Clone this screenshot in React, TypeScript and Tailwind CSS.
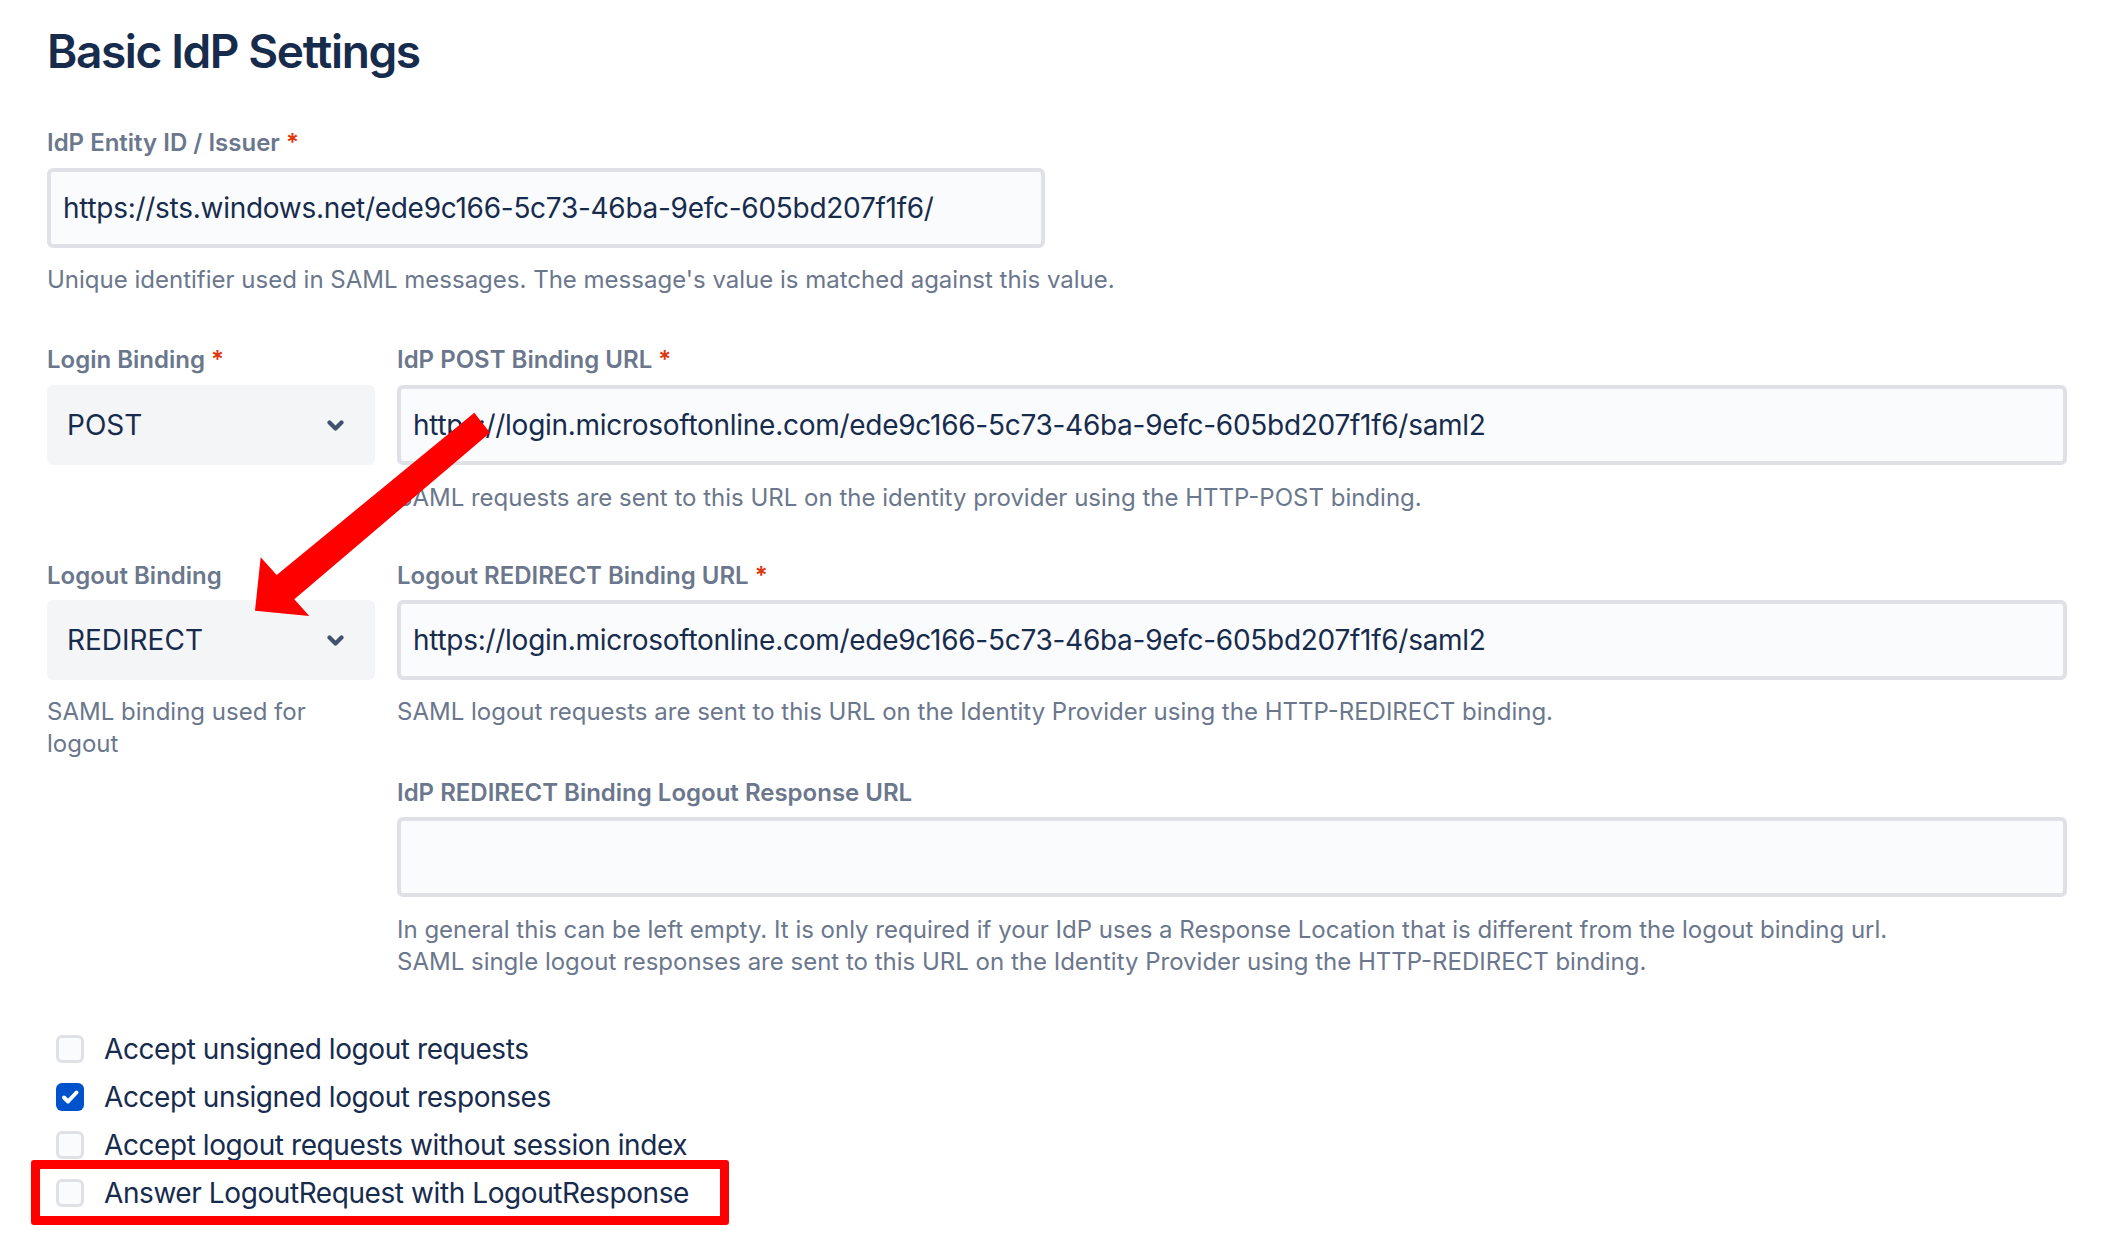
import React from "react";

function Label({ text, required }: { text: string; required?: boolean }) {
  return (
    <div className="text-[24px] leading-[32px] font-semibold text-[#6b778c]">
      {text}
      {required && <span className="text-[#de350b]"> *</span>}
    </div>
  );
}

function Help({ children }: { children: React.ReactNode }) {
  return <div className="text-[24px] leading-[32px] text-[#6b778c]">{children}</div>;
}

function TextInput({ value, className }: { value: string; className?: string }) {
  return (
    <div
      className={
        "flex items-center h-[80px] border-[4px] border-[#dfe1e6] bg-[#fafbfc] rounded-[6px] pl-[12px] text-[28px] leading-[36px] tracking-[-0.01em] text-[#172b4d] " +
        (className || "")
      }
    >
      {value}
    </div>
  );
}

function Select({ value }: { value: string }) {
  return (
    <div className="flex items-center justify-between h-[80px] bg-[#f4f5f7] rounded-[6px] pl-[20px] pr-[31px] text-[28px] leading-[36px] text-[#172b4d]">
      <span>{value}</span>
      <svg width="17" height="11" viewBox="0 0 17 11" fill="none">
        <path d="M2.5 2.5 L8.5 8.5 L14.5 2.5" stroke="#42526e" strokeWidth="4.2" strokeLinecap="round" strokeLinejoin="round" />
      </svg>
    </div>
  );
}

function Checkbox({ checked, label }: { checked?: boolean; label: string }) {
  return (
    <div className="flex items-center h-[28px] pl-[9px]">
      {checked ? (
        <div className="w-[28px] h-[28px] rounded-[6px] bg-[#0052cc] flex items-center justify-center">
          <svg width="28" height="28" viewBox="0 0 28 28" fill="none">
            <path d="M8 14.5 L12 18.5 L20.5 9.5" stroke="white" strokeWidth="4" strokeLinecap="round" strokeLinejoin="round" />
          </svg>
        </div>
      ) : (
        <div className="w-[28px] h-[28px] rounded-[6px] border-[3px] border-[#dfe1e6] bg-[#fafbfc]" />
      )}
      <span className="ml-[20px] text-[28px] leading-[28px] tracking-[-0.015em] text-[#172b4d]">{label}</span>
    </div>
  );
}

export default function App() {
  return (
    <div className="relative w-[2119px] min-h-[1242px] bg-white pl-[47px] pr-[52px] pt-[23px] font-['Inter','Noto_Sans',sans-serif]">
      <h1 className="text-[46px] leading-[56px] font-semibold text-[#172b4d] tracking-[-0.03em]">Basic IdP Settings</h1>

      <div className="mt-[48px]">
        <Label text="IdP Entity ID / Issuer" required />
        <TextInput className="mt-[9px] w-[998px] h-[78px]" value="https://sts.windows.net/ede9c166-5c73-46ba-9efc-605bd207f1f6/" />
        <div className="mt-[16px]">
          <Help>Unique identifier used in SAML messages. The message's value is matched against this value.</Help>
        </div>
      </div>

      <div className="mt-[48px] grid grid-cols-[328px_1fr] gap-x-[22px]">
        <div>
          <Label text="Login Binding" required />
          <div className="mt-[9px]">
            <Select value="POST" />
          </div>
        </div>
        <div>
          <Label text="IdP POST Binding URL" required />
          <TextInput className="mt-[9px]" value="https://login.microsoftonline.com/ede9c166-5c73-46ba-9efc-605bd207f1f6/saml2" />
          <div className="mt-[17px]">
            <Help>SAML requests are sent to this URL on the identity provider using the HTTP-POST binding.</Help>
          </div>
        </div>
      </div>

      <div className="mt-[46px] grid grid-cols-[328px_1fr] gap-x-[22px]">
        <div>
          <Label text="Logout Binding" />
          <div className="mt-[8px]">
            <Select value="REDIRECT" />
          </div>
          <div className="mt-[16px]">
            <Help>SAML binding used for logout</Help>
          </div>
        </div>
        <div>
          <Label text="Logout REDIRECT Binding URL" required />
          <TextInput className="mt-[8px]" value="https://login.microsoftonline.com/ede9c166-5c73-46ba-9efc-605bd207f1f6/saml2" />
          <div className="mt-[16px]">
            <Help>SAML logout requests are sent to this URL on the Identity Provider using the HTTP-REDIRECT binding.</Help>
          </div>
        </div>
      </div>

      <div className="mt-[17px] grid grid-cols-[328px_1fr] gap-x-[22px]">
        <div />
        <div>
          <Label text="IdP REDIRECT Binding Logout Response URL" />
          <TextInput className="mt-[8px]" value="" />
          <div className="mt-[17px]">
            <Help>
              In general this can be left empty. It is only required if your IdP uses a Response Location that is different from the logout binding url.
              <br />
              SAML single logout responses are sent to this URL on the Identity Provider using the HTTP-REDIRECT binding.
            </Help>
          </div>
        </div>
      </div>

      <div className="mt-[57px] flex flex-col gap-[20px]">
        <Checkbox label="Accept unsigned logout requests" />
        <Checkbox checked label="Accept unsigned logout responses" />
        <Checkbox label="Accept logout requests without session index" />
        <div className="relative">
          <Checkbox label="Answer LogoutRequest with LogoutResponse" />
          <div className="absolute -left-[16px] -top-[19px] w-[698px] h-[65px] border-[9px] border-[#ff0000] rounded-[3px] pointer-events-none" />
        </div>
      </div>

      <svg
        className="absolute left-[250px] top-[405px] pointer-events-none"
        width="245"
        height="215"
        viewBox="0 0 245 215"
      >
        <polygon
          points="224.3,7.7 26.7,170 10.7,152.3 5,205.7 59.3,211 44.3,194.3 240,27.7"
          fill="#ff0000"
        />
      </svg>
    </div>
  );
}
